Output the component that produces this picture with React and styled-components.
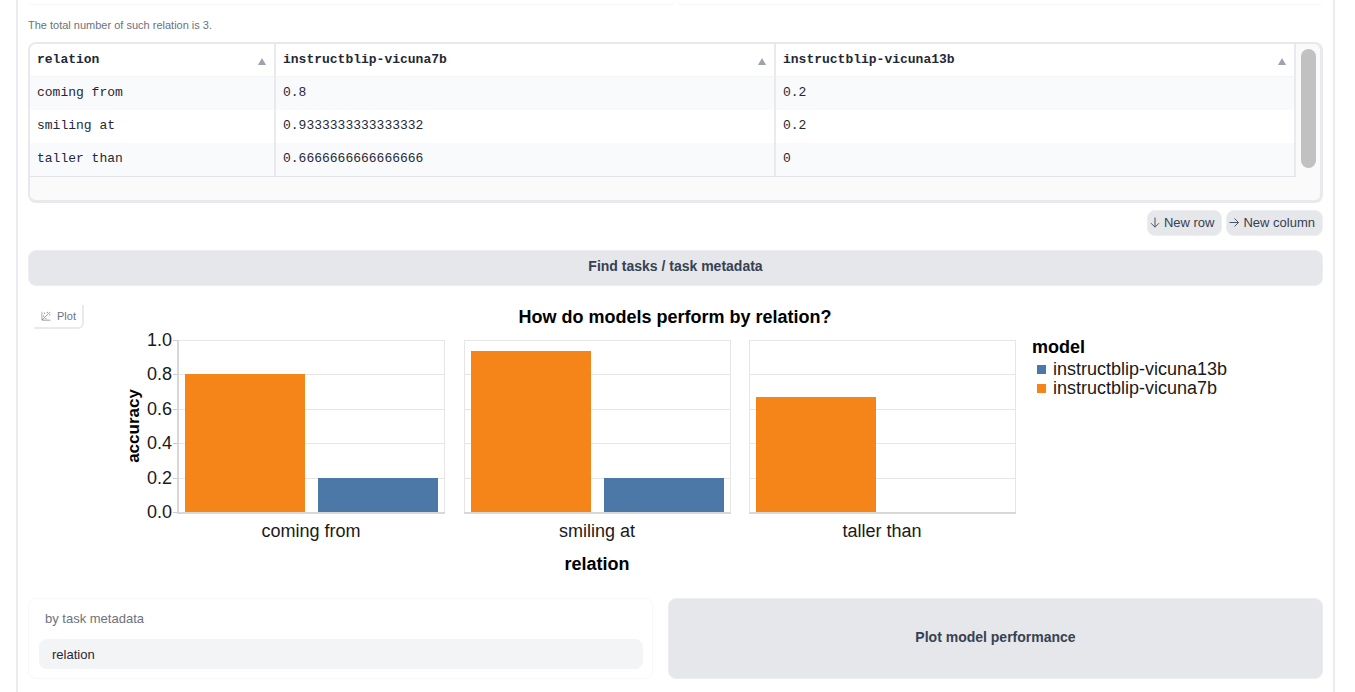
import React from "react";
import styled, { createGlobalStyle } from "styled-components";

const Global = createGlobalStyle`
  *, *::before, *::after { box-sizing: border-box; }
  body {
    margin: 0;
    background: #fff;
    color: #374151;
    font-family: "Liberation Sans", Arial, sans-serif;
    overflow-x: hidden;
  }
  button, input { font-family: inherit; }
`;

const Frame = styled.main`
  display: flex;
  flex-direction: column;
  min-height: 100vh;
  margin: 0 20px 0 16px;
  padding: 0 10px 13px;
  border: solid #ebecf1;
  border-width: 0 2px;
`;

const PanelRow = styled.div`
  display: grid;
  grid-template-columns: 1fr 1fr;
  gap: 2px;
`;

const PanelEnd = styled.div`
  height: 5px;
  border-bottom: 1px solid #f5f6f7;
  border-radius: 0 0 8px 8px;
`;

const Note = styled.p`
  margin: 13px 0 10px;
  font-size: 11px;
  line-height: 14px;
  color: #6b7280;
`;

const TableBox = styled.div`
  display: flex;
  height: 161px;
  background: #fafafa;
  border: solid #e8e9ec;
  border-width: 2px 3px 3px 2px;
  border-radius: 8px;
  overflow: hidden;
`;

const Table = styled.table`
  flex: 1;
  align-self: flex-start;
  border-collapse: separate;
  border-spacing: 0;
  table-layout: fixed;
  background: #fff;
  border-bottom: 1px solid #e1e3e8;
  font-family: "Liberation Mono", monospace;
  font-size: 13px;
  line-height: 16px;
  color: #1f2937;

  th, td {
    height: 33px;
    padding: 0 7px;
    text-align: left;
    border-right: 2px solid #e8eaed;
  }
  td {
    padding-bottom: 2px;
    font-weight: 400;
  }
  tbody tr:nth-child(odd) { background: #f9fafb; }
`;

const HeadCell = styled.th`
  width: ${(p) => p.$width};
  border-bottom: 1px solid #f3f4f6;
`;

const HeadLine = styled.div`
  display: flex;
  justify-content: space-between;
  align-items: center;
`;

const SortButton = styled.button`
  display: flex;
  padding: 2px 1px 0 0;
  border: 0;
  background: none;
`;

const Track = styled.div`
  width: 24px;
  padding: 5px 4px 0 5px;
`;

const Thumb = styled.div`
  width: 15px;
  height: 119px;
  border-radius: 8px;
  background: #c1c1c1;
`;

const Actions = styled.div`
  display: flex;
  justify-content: flex-end;
  gap: 4px;
  margin: 7px 0 14px;
`;

const SmallButton = styled.button`
  display: flex;
  align-items: center;
  gap: 4px;
  height: 26px;
  padding: 0 7px 1px 2px;
  border: 1px solid #eceef1;
  border-radius: 8px;
  background: #e5e7eb;
  color: #374151;
  font-size: 13px;
  line-height: 16px;
`;

const WideButton = styled.button`
  height: ${(p) => (p.$tall ? 81 : 36)}px;
  padding: 0 0 4px;
  border: 1px solid #eceef1;
  border-radius: 8px;
  background: #e5e7eb;
  color: #374151;
  font-size: 14px;
  font-weight: 700;
  line-height: 20px;
`;

const PlotBlock = styled.section`
  display: grid;
  margin: 19px 0 17px;
`;

const PlotLabel = styled.div`
  grid-area: 1 / 1;
  justify-self: start;
  align-self: start;
  display: flex;
  align-items: center;
  gap: 6px;
  height: 24px;
  margin-left: 6px;
  padding: 0 6px 0 7px;
  border: solid #e8eaed;
  border-width: 0 2px 2px 0;
  border-radius: 0 0 6px 0;
  color: #6b7280;
  font-size: 11px;
  line-height: 14px;
`;

const Chart = styled.svg`
  grid-area: 1 / 1;
  justify-self: center;
  display: block;
  width: 1100px;
  max-width: 100%;
  height: auto;
  overflow: visible;
  font-family: "Liberation Sans", Arial, sans-serif;
  font-size: 18px;
  fill: #1a1a1a;
`;

const Controls = styled.div`
  display: grid;
  grid-template-columns: 625fr 655fr;
  gap: 15px;
`;

const Field = styled.div`
  display: flex;
  flex-direction: column;
  gap: 12px;
  height: 81px;
  padding: 12px 9px 0 10px;
  border: 1px solid #f7f8f9;
  border-radius: 8px;
`;

const FieldLabel = styled.label`
  padding-left: 6px;
  color: #6b7280;
  font-size: 13px;
  line-height: 16px;
`;

const FieldInput = styled.input`
  width: 100%;
  height: 30px;
  padding: 0 13px;
  border: 0;
  border-radius: 8px;
  background: #f3f4f6;
  color: #1f2937;
  font-size: 13px;
`;

const columns = [
  { name: "relation", width: "246px" },
  { name: "instructblip-vicuna7b", width: "500px" },
  { name: "instructblip-vicuna13b", width: "auto" },
];

const rows = [
  ["coming from", "0.8", "0.2"],
  ["smiling at", "0.9333333333333332", "0.2"],
  ["taller than", "0.6666666666666666", "0"],
];

const ORANGE = "#f58518";
const BLUE = "#4c78a8";
const AXIS_TOP = 35;
const AXIS_HEIGHT = 172;
const BASE = AXIS_TOP + AXIS_HEIGHT;
const TICKS = [0, 0.2, 0.4, 0.6, 0.8, 1];
const yOf = (v) => Math.round(BASE - v * AXIS_HEIGHT);

function Facet({ x, name, values, first }) {
  return (
    <g>
      <rect x={x + 0.5} y={AXIS_TOP + 0.5} width="266" height={AXIS_HEIGHT} fill="none" stroke="#e6e6e6" />
      {TICKS.map((t) => (
        <line key={t} x1={x} x2={x + 267} y1={yOf(t) + 0.5} y2={yOf(t) + 0.5} stroke="#e6e6e6" />
      ))}
      {values.map((v, i) =>
        v > 0 ? (
          <rect
            key={i}
            x={x + (i ? 140 : 7)}
            y={yOf(v)}
            width="120"
            height={BASE - yOf(v)}
            fill={i ? BLUE : ORANGE}
          />
        ) : null
      )}
      <rect x={x} y={BASE} width="267" height="2" fill="#d8d8d8" />
      {first && <rect x={x - 1} y={AXIS_TOP} width="2" height={AXIS_HEIGHT + 2} fill="#d8d8d8" />}
      <text x={x + 133} y="232" textAnchor="middle">{name}</text>
    </g>
  );
}

function PerformanceChart() {
  return (
    <Chart viewBox="0 0 1100 276" role="img" aria-label="How do models perform by relation?">
      <text x="549" y="18" textAnchor="middle" fontWeight="700" fill="#000">
        How do models perform by relation?
      </text>
      <text transform="translate(13 121) rotate(-90)" textAnchor="middle" fontSize="17" fontWeight="700" fill="#000">
        accuracy
      </text>
      {TICKS.map((t) => (
        <g key={t}>
          <text x="46" y={yOf(t) + 6} textAnchor="end">{t.toFixed(1)}</text>
          <line x1="47" x2="52" y1={yOf(t) + 0.5} y2={yOf(t) + 0.5} stroke="#ccc" />
        </g>
      ))}
      <Facet x={52} name="coming from" values={[0.8, 0.2]} first />
      <Facet x={338} name="smiling at" values={[0.9333, 0.2]} />
      <Facet x={623} name="taller than" values={[0.6667, 0]} />
      <text x="471" y="265" textAnchor="middle" fontWeight="700" fill="#000">relation</text>
      <text x="906" y="48" fontWeight="700" fill="#000">model</text>
      <rect x="911" y="60" width="9" height="9" fill={BLUE} />
      <text x="927" y="70">instructblip-vicuna13b</text>
      <rect x="911" y="79" width="9" height="9" fill={ORANGE} />
      <text x="927" y="89">instructblip-vicuna7b</text>
    </Chart>
  );
}

const SortIcon = () => (
  <svg width="8" height="7" viewBox="0 0 8 7" aria-hidden="true">
    <path d="M4 0 8 7H0Z" fill="#9ca3af" />
  </svg>
);

const ArrowIcon = ({ down }) => (
  <svg width="10" height="11" viewBox="0 0 10 11" fill="none" stroke="#4b5563" aria-hidden="true">
    <path d={down ? "M5 .5v9.5M1 6.2 5 10.2 9 6.2" : "M.5 5.5H9.5M5.5 1.5 9.5 5.5 5.5 9.5"} />
  </svg>
);

const PlotIcon = () => (
  <svg width="10" height="10" viewBox="0 0 32 32" fill="#7b818d" aria-hidden="true">
    <circle cx="20" cy="4" r="2" />
    <circle cx="8" cy="16" r="2" />
    <circle cx="28" cy="12" r="2" />
    <circle cx="11" cy="7" r="2" />
    <circle cx="16" cy="24" r="2" />
    <path d="M30 3.4 28.6 2 4 26.6V2H2v26a2 2 0 0 0 2 2h26v-2H5.4Z" />
  </svg>
);

export default function App() {
  return (
    <>
      <Global />
      <Frame>
        <PanelRow>
          <PanelEnd />
          <PanelEnd />
        </PanelRow>
        <Note>The total number of such relation is 3.</Note>
        <TableBox>
          <Table>
            <thead>
              <tr>
                {columns.map((c) => (
                  <HeadCell key={c.name} $width={c.width} scope="col">
                    <HeadLine>
                      {c.name}
                      <SortButton type="button" aria-label={`Sort by ${c.name}`}>
                        <SortIcon />
                      </SortButton>
                    </HeadLine>
                  </HeadCell>
                ))}
              </tr>
            </thead>
            <tbody>
              {rows.map((r) => (
                <tr key={r[0]}>
                  {r.map((v, i) => (
                    <td key={i}>{v}</td>
                  ))}
                </tr>
              ))}
            </tbody>
          </Table>
          <Track>
            <Thumb />
          </Track>
        </TableBox>
        <Actions>
          <SmallButton type="button">
            <ArrowIcon down />
            New row
          </SmallButton>
          <SmallButton type="button">
            <ArrowIcon />
            New column
          </SmallButton>
        </Actions>
        <WideButton type="button">Find tasks / task metadata</WideButton>
        <PlotBlock>
          <PlotLabel>
            <PlotIcon />
            Plot
          </PlotLabel>
          <PerformanceChart />
        </PlotBlock>
        <Controls>
          <Field>
            <FieldLabel htmlFor="metadata">by task metadata</FieldLabel>
            <FieldInput id="metadata" defaultValue="relation" />
          </Field>
          <WideButton type="button" $tall>
            Plot model performance
          </WideButton>
        </Controls>
      </Frame>
    </>
  );
}
